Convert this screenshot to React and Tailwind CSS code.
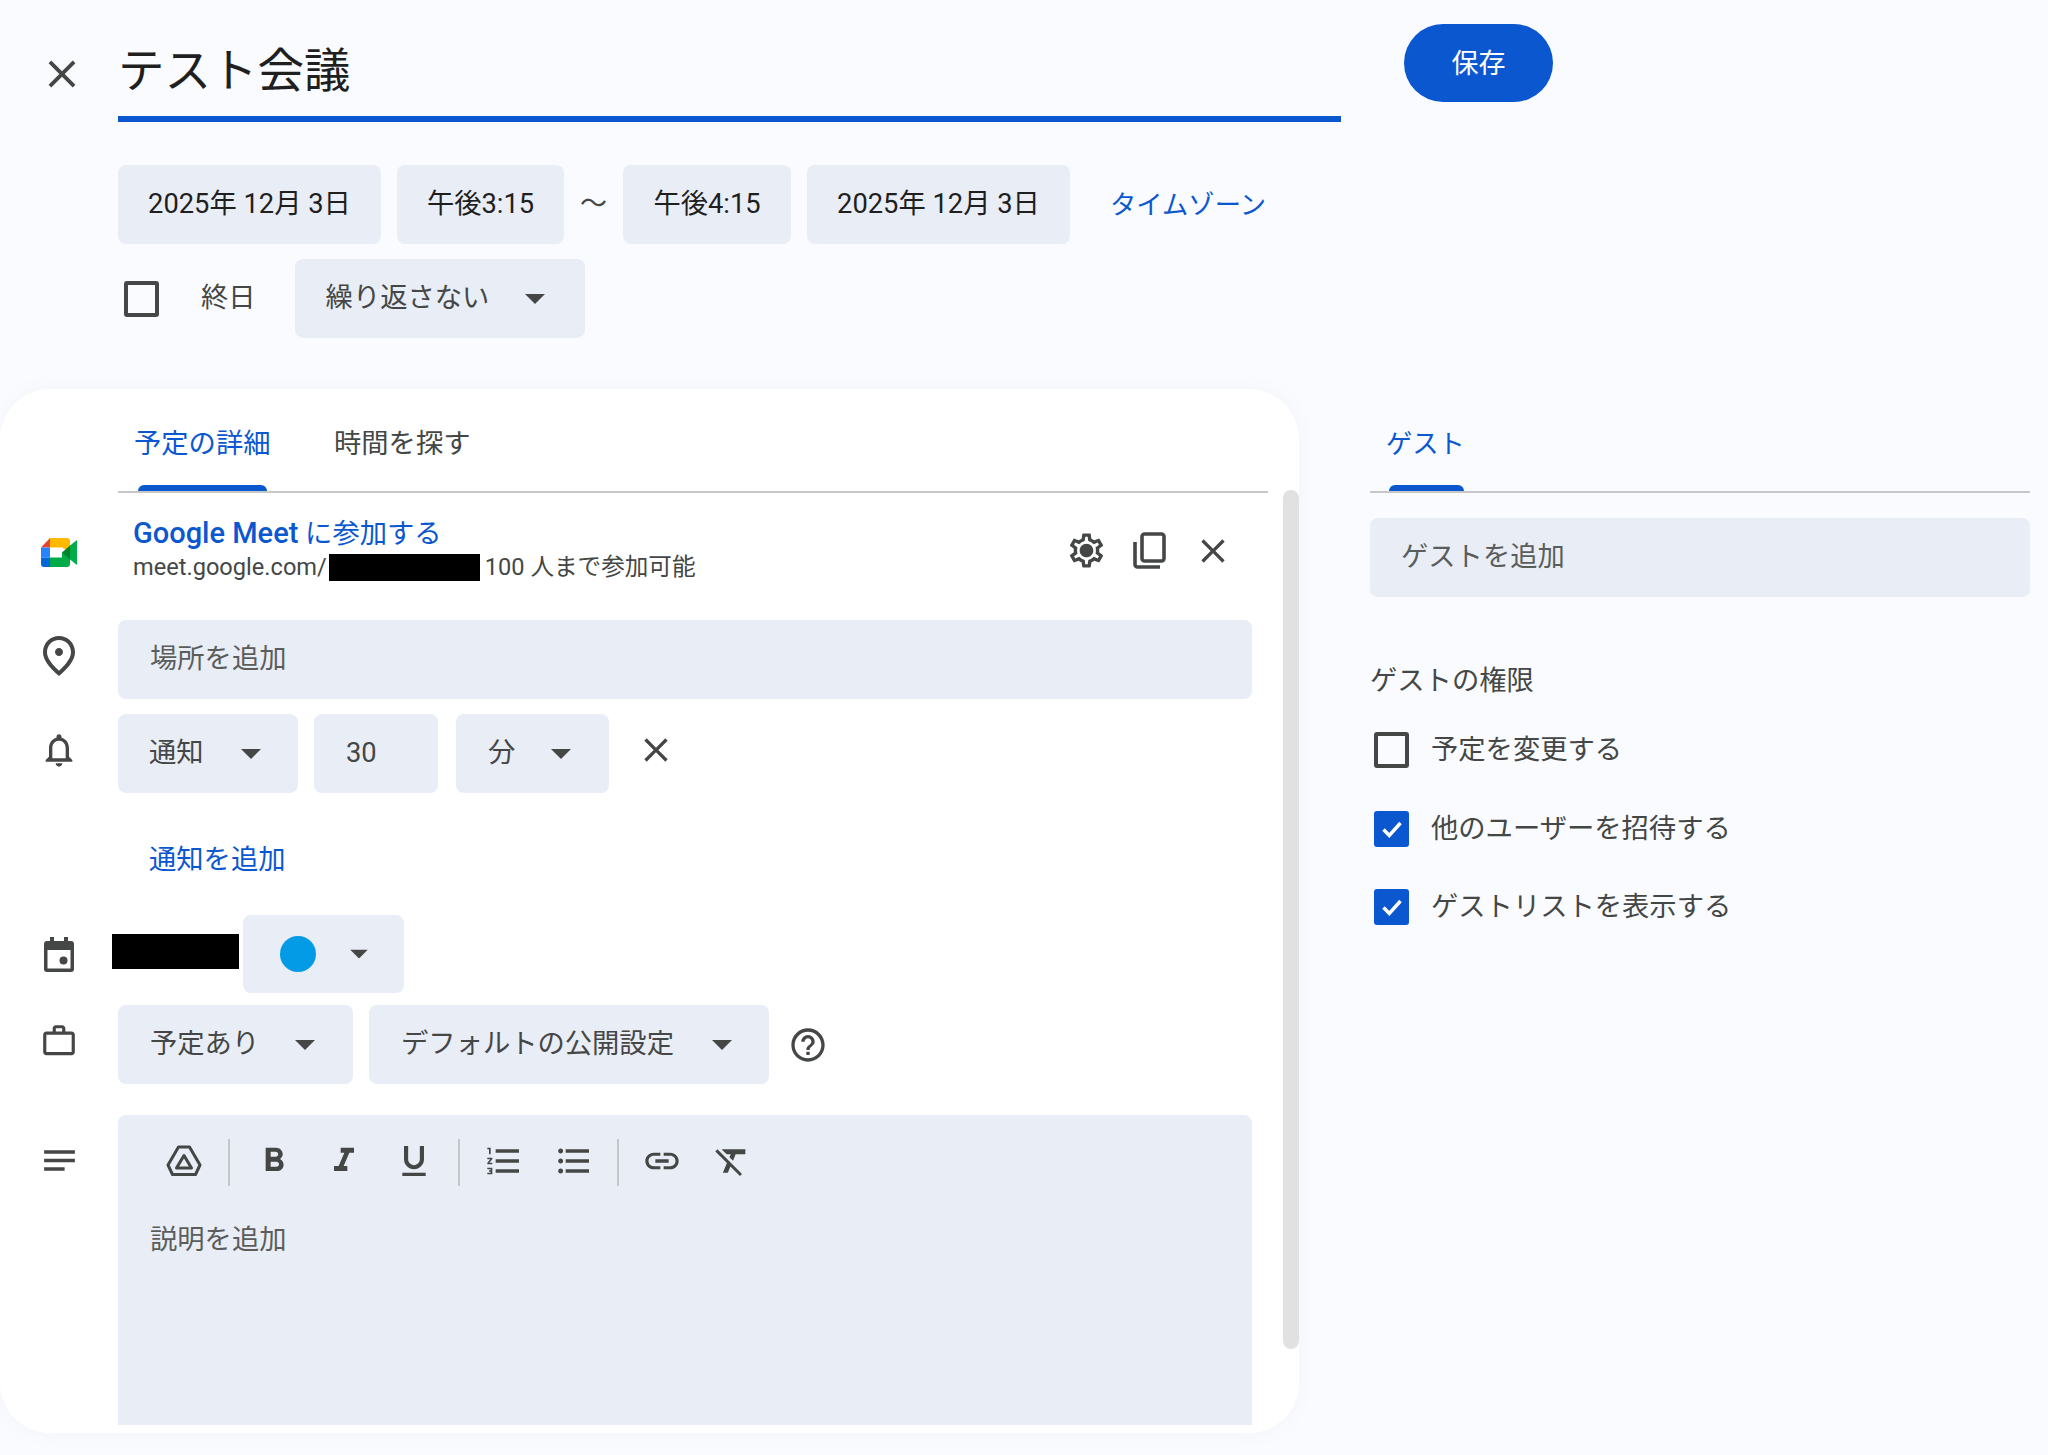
import React from "react";
import {
  MdClose, MdOutlineSettings, MdOutlinePlace, MdOutlineNotifications,
  MdOutlineWorkOutline, MdOutlineNotes, MdHelpOutline, MdFormatBold, MdFormatItalic,
  MdFormatUnderlined, MdFormatListNumbered, MdFormatListBulleted, MdLink, MdFormatClear,
} from "react-icons/md";

function Arrow({ className = "" }) {
  return (
    <svg width="20" height="10" viewBox="0 0 20 10" className={"shrink-0 " + className}>
      <path d="M0 0h20L10 10z" fill="#444746" />
    </svg>
  );
}

function Field({ className = "", children }) {
  return (
    <div className={"flex h-[79px] items-center rounded-lg bg-[#e9edf6] text-[27.3px] " + className}>
      {children}
    </div>
  );
}

function Check({ checked, className = "" }) {
  if (checked) {
    return (
      <div className={"flex h-[36px] w-[35px] shrink-0 items-center justify-center rounded-[3px] bg-[#0b57d0] " + className}>
        <svg width="24" height="24" viewBox="0 0 24 24">
          <path d="M3.5 12.5l5.8 6L20.5 6" fill="none" stroke="#fff" strokeWidth="3.4" />
        </svg>
      </div>
    );
  }
  return <div className={"h-[36px] w-[35px] shrink-0 rounded-[3px] border-[4px] border-[#444746] " + className} />;
}

function MeetLogo() {
  return (
    <svg width="36" height="29" viewBox="0 0 36 29">
      <path d="M9 0L0 9.5h9z" fill="#ea4335" />
      <path d="M9 0h17a3 3 0 0 1 3 3v11.5l-8-5H9z" fill="#ffba00" />
      <path d="M0 9.5h9v10H0z" fill="#2684fc" />
      <path d="M0 19.5h9V29H3a3 3 0 0 1-3-3z" fill="#0066da" />
      <path d="M9 19.5h12v-5l8-1V26a3 3 0 0 1-3 3H9z" fill="#00ac47" />
      <path d="M21 14.5L29 7.5v14z" fill="#00832d" />
      <path d="M29 7.5l7-5.5v25l-7-5.5z" fill="#00ac47" />
    </svg>
  );
}

function CalendarIcon() {
  return (
    <svg width="30" height="35" viewBox="0 0 30 35">
      <path d="M6 0h4v4h10V0h4v4h3a3 3 0 0 1 3 3v25a3 3 0 0 1-3 3H3a3 3 0 0 1-3-3V7a3 3 0 0 1 3-3h3zM3.5 13v18.5h23V13z" fill="#444746" fillRule="evenodd" />
      <circle cx="19.5" cy="23.5" r="4" fill="#444746" />
    </svg>
  );
}

function DriveIcon() {
  return (
    <svg width="36" height="32" viewBox="0 0 36 32" fill="none" stroke="#444746" strokeWidth="3" strokeLinejoin="round">
      <path d="M12.5 2h11L34 20l-4.5 9.5h-23L2 20z" />
      <path d="M18 10.5L25.5 23h-15z" />
    </svg>
  );
}

function CopyIcon() {
  return (
    <svg width="33" height="37" viewBox="0 0 33 37" fill="none" stroke="#444746" strokeWidth="3.6">
      <rect x="9" y="2" width="22" height="27" rx="2.5" />
      <path d="M2 10v22.5a2.5 2.5 0 0 0 2.5 2.5H27" />
    </svg>
  );
}

function GearIcon() {
  return (
    <div className="relative flex items-center justify-center">
      <MdOutlineSettings size={41} />
      <div className="absolute h-[10px] w-[10px] rounded-full bg-[#444746]" />
    </div>
  );
}

function ToolIcon({ children }) {
  return <div className="mb-[4px] flex w-[70px] items-center justify-center text-[#444746]">{children}</div>;
}

function ToolDivider({ className = "mx-[9px]" }) {
  return <div className={"h-[47px] w-[2px] bg-[#c4c7c5] " + className} />;
}

function Gutter({ children, className = "" }) {
  return <div className={"flex w-[118px] shrink-0 items-center justify-center text-[#444746] " + className}>{children}</div>;
}

export default function App() {
  return (
    <div className="h-[1455px] w-[2048px] overflow-hidden bg-[#f9fbfe] font-['Roboto','Noto_Sans_CJK_JP',sans-serif] text-[#444746]">
      <div className="flex">
        <div className="flex h-[122px] w-[118px] shrink-0 items-center justify-center pl-[6px] pt-[26px] text-[#444746]">
          <MdClose size={46} />
        </div>
        <div className="flex h-[122px] w-[1223px] items-center border-b-[6px] border-[#0b57d0] pt-[26px] text-[46.5px] leading-none text-[#1f1f1f]">
          テスト会議
        </div>
        <div className="ml-[63px] mt-[24px] flex h-[78px] w-[149px] items-center justify-center rounded-full bg-[#0b57d0] pt-[2px] text-[27px] text-white">
          保存
        </div>
      </div>

      <div className="ml-[118px] mt-[43px] flex items-center">
        <Field className="w-[263px] justify-center text-[#1f1f1f]">2025年 12月 3日</Field>
        <Field className="ml-[16px] w-[167px] justify-center text-[#1f1f1f]">午後3:15</Field>
        <div className="w-[59px] text-center text-[27px]">〜</div>
        <Field className="w-[168px] justify-center text-[#1f1f1f]">午後4:15</Field>
        <Field className="ml-[16px] w-[263px] justify-center text-[#1f1f1f]">2025年 12月 3日</Field>
        <div className="ml-[40px] pt-[2px] text-[26.3px] text-[#0b57d0]">タイムゾーン</div>
      </div>

      <div className="ml-[118px] mt-[15px] flex items-center">
        <Check className="ml-[6px]" />
        <div className="ml-[42px] text-[27.3px]">終日</div>
        <Field className="ml-[39px] w-[290px] pl-[31px]">
          繰り返さない
          <Arrow className="ml-[36px]" />
        </Field>
      </div>

      <div className="mt-[51px] flex">
        <div className="relative h-[1044px] w-[1299px] shrink-0 overflow-hidden rounded-[50px] bg-white shadow-[0_0_24px_rgba(60,64,120,0.03)]">
          <div className="ml-[118px] mr-[31px] flex h-[104px] border-b-[2px] border-[#c7c7c7] pt-[35px] text-[27.3px] leading-[40px]">
            <div className="relative h-[67px] w-[167px] pl-[16px] text-[#0b57d0]">
              予定の詳細
              <div className="absolute bottom-0 left-[20px] h-[6px] w-[129px] rounded-t-[6px] bg-[#0b57d0]" />
            </div>
            <div className="ml-[49px]">時間を探す</div>
          </div>

          <div className="absolute bottom-[84px] right-0 top-[101px] w-[16px] rounded-full bg-[#e1e1e1]" />

          <div className="flex h-[127px] items-center">
            <Gutter className="pb-[8px]"><MeetLogo /></Gutter>
            <div className="ml-[15px] flex w-[933px] flex-col pb-[16px]">
              <div className="text-[27.3px] leading-[36px] text-[#0b57d0]">
                <span className="text-[29px] font-medium">Google Meet</span> に参加する
              </div>
              <div className="flex items-center text-[23.6px] leading-[30px]">
                meet.google.com/
                <div className="ml-[2px] h-[27px] w-[151px] bg-black" />
                <span className="ml-[5px]">100 人まで参加可能</span>
              </div>
            </div>
            <div className="flex items-center pb-[12px] text-[#444746]">
              <GearIcon />
              <div className="ml-[26px]"><CopyIcon /></div>
              <MdClose size={40} className="ml-[27px]" />
            </div>
          </div>

          <div className="flex items-center">
            <Gutter className="pb-[8px]"><MdOutlinePlace size={48} /></Gutter>
            <Field className="w-[1134px] pl-[32px] text-[#5a5d5c]">場所を追加</Field>
          </div>

          <div className="mt-[15px] flex items-center">
            <Gutter className="pb-[8px]"><MdOutlineNotifications size={40} /></Gutter>
            <Field className="w-[180px] pl-[31px]">通知<Arrow className="ml-[37px]" /></Field>
            <Field className="ml-[16px] w-[124px] pl-[32px]">30</Field>
            <Field className="ml-[18px] w-[153px] pl-[32px]">分<Arrow className="ml-[36px]" /></Field>
            <MdClose size={40} className="ml-[27px] mb-[8px]" />
          </div>

          <div className="flex h-[122px] items-center pl-[149px] pt-[12px] text-[27.3px] text-[#0b57d0]">通知を追加</div>

          <div className="flex items-center">
            <Gutter><CalendarIcon /></Gutter>
            <div className="ml-[-6px] mb-[6px] h-[35px] w-[127px] bg-black" />
            <div className="ml-[4px] flex h-[78px] w-[161px] items-center rounded-lg bg-[#e9edf6] pl-[37px]">
              <div className="h-[36px] w-[36px] rounded-full bg-[#039be5]" />
              <Arrow className="ml-[33px] scale-90" />
            </div>
          </div>

          <div className="mt-[12px] flex items-center">
            <Gutter className="pb-[8px]"><MdOutlineWorkOutline size={38} /></Gutter>
            <Field className="w-[235px] pl-[32px]">予定あり<Arrow className="ml-[36px]" /></Field>
            <Field className="ml-[16px] w-[400px] pl-[32px]">デフォルトの公開設定<Arrow className="ml-[38px]" /></Field>
            <MdHelpOutline size={40} className="ml-[19px]" />
          </div>

          <div className="mt-[31px] flex">
            <Gutter className="h-[90px]"><MdOutlineNotes size={41} /></Gutter>
            <div className="h-[310px] w-[1134px] rounded-t-lg bg-[#e9edf6] pt-[24px]">
              <div className="flex h-[47px] items-center pl-[31px]">
                <ToolIcon><DriveIcon /></ToolIcon>
                <ToolDivider />
                <ToolIcon><MdFormatBold size={40} /></ToolIcon>
                <ToolIcon><MdFormatItalic size={40} /></ToolIcon>
                <ToolIcon><MdFormatUnderlined size={40} /></ToolIcon>
                <ToolDivider />
                <ToolIcon><MdFormatListNumbered size={40} /></ToolIcon>
                <ToolIcon><MdFormatListBulleted size={40} /></ToolIcon>
                <ToolDivider className="ml-[8px] mr-[8px]" />
                <ToolIcon><MdLink size={40} /></ToolIcon>
                <ToolIcon><MdFormatClear size={40} /></ToolIcon>
              </div>
              <div className="ml-[32px] mt-[34px] text-[27.3px] leading-[40px] text-[#5a5d5c]">説明を追加</div>
            </div>
          </div>
        </div>

        <div className="ml-[71px] w-[660px]">
          <div className="flex h-[104px] border-b-[2px] border-[#c7c7c7] pt-[35px] text-[26.3px] leading-[40px] text-[#0b57d0]">
            <div className="relative h-[67px] w-[110px] whitespace-nowrap pl-[16px]">
              ゲスト
              <div className="absolute bottom-0 left-[19px] h-[6px] w-[75px] rounded-t-[6px] bg-[#0b57d0]" />
            </div>
          </div>
          <Field className="mt-[25px] w-[660px] pl-[31px] text-[#5a5d5c]">ゲストを追加</Field>
          <div className="mt-[64px] text-[27.3px] leading-[40px]">ゲストの権限</div>
          <div className="mt-[31px] flex items-center text-[27.3px] leading-[36px]">
            <Check className="ml-[4px]" /><span className="ml-[22px]">予定を変更する</span>
          </div>
          <div className="mt-[43px] flex items-center text-[27.3px] leading-[36px]">
            <Check checked className="ml-[4px]" /><span className="ml-[22px]">他のユーザーを招待する</span>
          </div>
          <div className="mt-[42px] flex items-center text-[27.3px] leading-[36px]">
            <Check checked className="ml-[4px]" /><span className="ml-[22px]">ゲストリストを表示する</span>
          </div>
        </div>
      </div>
    </div>
  );
}
